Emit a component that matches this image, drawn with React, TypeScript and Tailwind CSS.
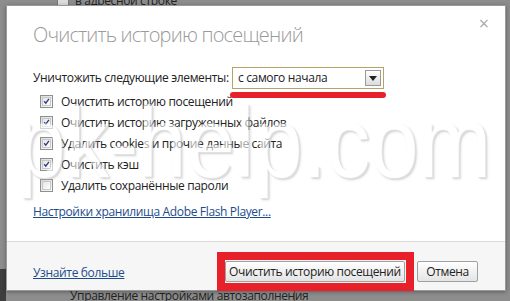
import React from "react";

const Check = ({ checked }: { checked: boolean }) => (
  <div className="w-[13px] h-[13px] shrink-0 border border-[#8e8f8f] bg-gradient-to-br from-[#dcdcdc] to-[#fbfbfb] flex items-center justify-center">
    <div className="w-[9px] h-[9px] border border-[#c8c8c8] bg-gradient-to-br from-[#e4e4e4] to-white flex items-center justify-center">
      {checked && (
        <svg width="9" height="9" viewBox="0 0 9 9">
          <path d="M1.5 4.2 L3.6 6.6 L7.6 1" stroke="#2a3c80" strokeWidth="1.7" fill="none" />
        </svg>
      )}
    </div>
  </div>
);

const items: [string, boolean][] = [
  ["Очистить историю посещений", true],
  ["Очистить историю загруженных файлов", true],
  ["Удалить cookies и прочие данные сайта", true],
  ["Очистить кэш", true],
  ["Удалить сохранённые пароли", false],
];

export default function App() {
  return (
    <div
      className="w-[510px] h-[301px] bg-[#8d8d8d] relative overflow-hidden text-[12px] tracking-[-0.35px]"
      style={{ fontFamily: '"Open Sans", "Noto Sans", sans-serif' }}
    >
      <div className="absolute left-[57px] top-[-8px] flex items-center text-[#222]">
        <div className="w-[12px] h-[12px] border border-[#777] bg-[#ddd]" />
        <span className="ml-[6px]">в адресной строке</span>
      </div>
      <div className="absolute left-0 bottom-0 w-[6px] h-[32px] bg-[#3e3e3e]" />
      <div className="absolute left-[70px] top-[290px] text-[#222] leading-none">Управление настройками автозаполнения</div>
      <div className="absolute left-[294px] top-[289px] w-px h-[14px] bg-[#555]" />

      <div className="absolute left-[6px] top-[5px] w-[500px] h-[286px] bg-white border border-[#9a9a9a] shadow-[0_1px_4px_rgba(0,0,0,0.35)] flex flex-col">
        <div className="relative h-[235px] px-[26px]">
          <div className="pt-[15px] text-[20px] font-light text-[#9a9a9a] leading-[28px] tracking-[-0.8px]">
            Очистить историю посещений
          </div>
          <div className="absolute right-[16px] top-[8px] text-[#aaa] text-[18px] leading-none tracking-normal">×</div>
          <div className="mt-[18px] flex items-center text-[#222] h-[22px]">
            <span className="w-[199px] shrink-0">Уничтожить следующие элементы:</span>
            <div className="relative w-[152px] h-[22px] border border-[#b8a265] bg-white flex items-center pl-[5px]">
              <span>с самого начала</span>
              <div className="absolute right-[2px] top-[2px] w-[16px] h-[16px] border border-[#9a9a9a] bg-gradient-to-b from-white to-[#dcdcdc] flex items-center justify-center">
                <svg width="8" height="5" viewBox="0 0 8 5"><path d="M0 0 L8 0 L4 5 Z" fill="#222" /></svg>
              </div>
              <div className="absolute left-[-3px] top-[24px] w-[156px] h-[6px] rounded-full bg-[#e8202a]" />
            </div>
          </div>
          <div className="mt-[6px] flex flex-col gap-[8px] pl-[7px]">
            {items.map(([t, c]) => (
              <div key={t} className="flex items-center gap-[8px] h-[13px] text-[#222] whitespace-nowrap">
                <Check checked={c} />
                <span>{t}</span>
              </div>
            ))}
          </div>
          <div className="mt-[11px] leading-[17px] text-[#1c4c8c] underline">Настройки хранилища Adobe Flash Player...</div>
          <div
            className="absolute left-[10px] top-[86px] text-[87px] leading-none text-white whitespace-nowrap tracking-[0px] pointer-events-none origin-top scale-y-[1.15]"
            style={{ textShadow: "1px 1px 0 #d0d0d0, 2px 2px 2px #b0b0b0", fontFamily: '"Liberation Sans", sans-serif', opacity: 0.6 }}
          >
            pk-help.com
          </div>
        </div>
        <div className="flex-1 border-t border-[#d9d9d9] bg-[#f6f6f6] flex items-start pt-[19px] px-[26px]">
          <span className="mt-[3px] text-[#1c4c8c] underline">Узнайте больше</span>
          <div className="ml-auto flex items-center gap-[12px]">
            <div className="relative">
              <div className="absolute left-[-8px] right-[-9px] top-[-9px] bottom-[-9px] border-[8px] border-[#e8202a]" />
              <div className="relative w-[180px] h-[21px] border border-[#a0a0a0] rounded-[2px] bg-gradient-to-b from-white to-[#e4e4e4] text-[#222] flex items-center justify-center">
                Очистить историю посещений
              </div>
            </div>
            <div className="w-[61px] h-[21px] border border-[#a0a0a0] rounded-[2px] bg-gradient-to-b from-white to-[#e4e4e4] text-[#222] flex items-center justify-center mr-[1px]">
              Отмена
            </div>
          </div>
        </div>
      </div>
    </div>
  );
}
